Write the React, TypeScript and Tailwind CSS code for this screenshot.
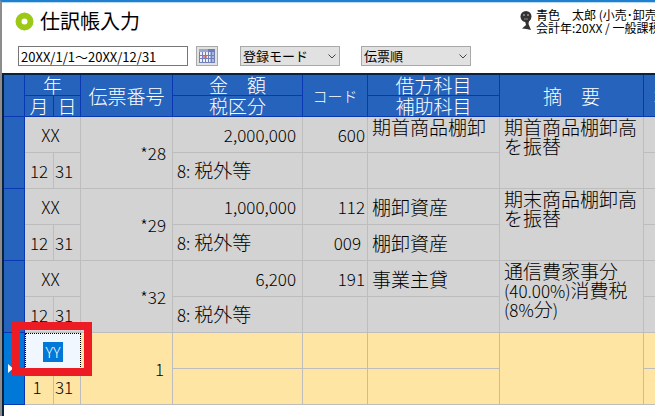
import { useState } from "react";

type Entry = {
  year: string;
  month: string;
  day: string;
  slip: string;
  amount: string;
  tax: string;
  code: string;
  subCode: string;
  account: string;
  accountTop?: boolean;
  subAccount: string;
  summary: string[];
};

const entries: Entry[] = [
  { year: "XX", month: "12", day: "31", slip: "*28", amount: "2,000,000", tax: "税外等", code: "600", subCode: "", account: "期首商品棚卸", accountTop: true, subAccount: "", summary: ["期首商品棚卸高", "を振替"] },
  { year: "XX", month: "12", day: "31", slip: "*29", amount: "1,000,000", tax: "税外等", code: "112", subCode: "009", account: "棚卸資産", subAccount: "棚卸資産", summary: ["期末商品棚卸高", "を振替"] },
  { year: "XX", month: "12", day: "31", slip: "*32", amount: "6,200", tax: "税外等", code: "191", subCode: "", account: "事業主貸", subAccount: "", summary: ["通信費家事分", "(40.00%)消費税", "(8%分)"] },
];

const head = "border-r border-b border-[#0a38b4] p-0 font-light";
const cell = "border-r border-b border-[#bdbdbd] p-0";

// Latin characters are set a little smaller than the kana and kanji
function Mixed({ text }: { text: string }) {
  return text.split(/([\x20-\x7e]+)/).map((part, i) =>
    /^[\x20-\x7e]+$/.test(part) ? (
      <span key={i} className="text-[17px]">
        {part}
      </span>
    ) : (
      part
    ),
  );
}

function CalendarIcon() {
  return (
    <svg width="16" height="14" viewBox="0 0 16 14" aria-hidden="true">
      <rect width="16" height="14" fill="#eef0f8" />
      <rect width="16" height="3" fill="#9aa6cc" />
      <rect x="9" width="7" height="3" fill="#6f7fb4" />
      <rect x="11" y="3" width="5" height="11" fill="#a9b4e0" />
      <rect x="4" y="6" width="4" height="4" fill="#f08a84" />
      <path d="M0.5 3V14M3.5 3V14M6.5 3V14M9.5 3V14M12.5 3V14M15.5 3V14M0 6.5H16M0 9.5H16M0 13.5H16" stroke="#7280b8" />
    </svg>
  );
}

function PersonIcon() {
  return (
    <svg className="mt-1 shrink-0" width="12" height="20" viewBox="0 0 12 20" aria-hidden="true">
      <ellipse cx="6" cy="5.5" rx="5.5" ry="5.5" fill="#333" />
      <path d="M5 10H9L8.500 13L11 19L6.500 18L2 17.500L6 14Z" fill="#333" />
      <circle cx="4" cy="4" r="1" fill="#999" />
      <circle cx="8" cy="4" r="1" fill="#999" />
      <path d="M4 8H8" stroke="#888" />
    </svg>
  );
}

function Dropdown({ label, options, className }: { label: string; options: string[]; className: string }) {
  return (
    <div className={`relative ${className}`}>
      <select
        aria-label={label}
        className="block h-5 w-full appearance-none border border-[#a9a9a9] bg-[#e1e1e1] pl-0.5 text-[13px] leading-4 text-black"
      >
        {options.map((o) => (
          <option key={o}>{o}</option>
        ))}
      </select>
      <svg className="pointer-events-none absolute top-2 right-1" width="8" height="5" viewBox="0 0 8 5" fill="none">
        <path d="M0.5 0.5L4 4L7.5 0.5" stroke="#444" />
      </svg>
    </div>
  );
}

function EntryRows({ entry }: { entry: Entry }) {
  return (
    <tbody className="bg-[#d3d3d3]">
      <tr className="h-9">
        <th rowSpan={2} scope="row" className={`${head} bg-[#2563bd]`} />
        <td colSpan={2} className={`${cell} pr-1 text-center`}>{entry.year}</td>
        <td rowSpan={2} className={`${cell} pr-1.5 text-right`}>{entry.slip}</td>
        <td className={`${cell} pr-1.5 text-right`}>{entry.amount}</td>
        <td className={`${cell} pr-0.5 text-right`}>{entry.code}</td>
        <td className={`${cell} pl-1 text-[19px] ${entry.accountTop ? "align-top" : ""}`}>{entry.account}</td>
        <td rowSpan={2} className={`${cell} pl-1 align-top text-[19px] leading-[19px]`}>
          {entry.summary.map((line) => (
            <p key={line} className="h-[19px]">
              <Mixed text={line} />
            </p>
          ))}
        </td>
        <td className={cell} />
      </tr>
      <tr className="h-9">
        <td className={`${cell} text-center`}>{entry.month}</td>
        <td className={`${cell} pl-px text-left`}>{entry.day}</td>
        <td className={`${cell} pl-1 text-[19px]`}>
          <Mixed text={`8: ${entry.tax}`} />
        </td>
        <td className={`${cell} pr-1.5 text-right`}>{entry.subCode}</td>
        <td className={`${cell} pl-1 text-[19px]`}>{entry.subAccount}</td>
        <td className={cell} />
      </tr>
    </tbody>
  );
}

export default function App() {
  const [period, setPeriod] = useState("20XX/1/1～20XX/12/31");
  const [year, setYear] = useState("YY");

  return (
    <main className="flex min-h-screen flex-col overflow-hidden border-t-2 border-l-2 border-t-[#2080cf] border-l-[#8c8c8c] bg-white font-['Noto_Sans_CJK_JP',sans-serif] text-black">
      <header className="flex h-11 justify-between overflow-hidden border-t border-[#b9dcf5] pl-[13px]">
        <div className="flex h-9 items-center gap-1.5">
          <svg width="19" height="19" viewBox="0 0 19 19" aria-hidden="true">
            <circle cx="9.5" cy="9.5" r="6" fill="none" stroke="#9bc916" strokeWidth="6" />
          </svg>
          <h1 className="text-[20px] leading-6 font-normal">仕訳帳入力</h1>
        </div>
        <div className="flex w-[135px] gap-1 pt-1 text-[12px] leading-[13px] whitespace-nowrap">
          <PersonIcon />
          <div className="pt-px">
            <p>青色　太郎 (小売･卸売業)</p>
            <p>会計年:20XX / 一般課税</p>
          </div>
        </div>
      </header>

      <div className="flex h-[27px] items-start pl-4">
        <input
          aria-label="期間"
          value={period}
          onChange={(e) => setPeriod(e.target.value)}
          className="h-5 w-[170px] border border-[#777] bg-white px-0.5 text-[13px] leading-4"
        />
        <button type="button" aria-label="カレンダー" className="ml-2 flex h-5 w-[22px] items-center justify-center border border-[#a9a9a9] bg-[#e1e1e1]">
          <CalendarIcon />
        </button>
        <Dropdown label="モード" options={["登録モード"]} className="ml-[22px] w-[100px]" />
        <Dropdown label="並び順" options={["伝票順", "日付順"]} className="ml-[21px] w-[110px]" />
      </div>

      <div className="grow overflow-hidden border-t-2 border-l-2 border-[#0b2140]">
        <table className="w-[740px] table-fixed border-separate border-spacing-0 text-[17px] leading-5 font-light">
          <colgroup>
            <col className="w-[21px]" />
            <col className="w-[29px]" />
            <col className="w-[27px]" />
            <col className="w-[92px]" />
            <col className="w-[130px]" />
            <col className="w-[65px]" />
            <col className="w-[132px]" />
            <col className="w-[144px]" />
            <col className="w-[100px]" />
          </colgroup>
          <thead className="bg-[#2563bd] text-[19px] text-white">
            <tr className="h-[21px]">
              <th rowSpan={2} className={head} />
              <th colSpan={2} className={head}>年</th>
              <th rowSpan={2} className={head}>伝票番号</th>
              <th className={head}>金　額</th>
              <th rowSpan={2} className={`${head} text-[15px]`}>コード</th>
              <th className={head}>借方科目</th>
              <th rowSpan={2} className={head}>摘　要</th>
              <th rowSpan={2} className={`${head} pl-2 text-left text-[15px]`}>コード</th>
            </tr>
            <tr className="h-[21px]">
              <th className={head}>月</th>
              <th className={head}>日</th>
              <th className={head}>税区分</th>
              <th className={head}>補助科目</th>
            </tr>
          </thead>
          {entries.map((entry) => (
            <EntryRows key={entry.slip} entry={entry} />
          ))}
          <tbody className="bg-[#ffe5a3]">
            <tr className="h-9">
              <th rowSpan={2} scope="row" className={`${head} bg-[#0078d7]`}>
                <svg width="5" height="9" viewBox="0 0 5 9" className="ml-1">
                  <path d="M0 0L5 4.5L0 9Z" fill="#fff" />
                </svg>
              </th>
              <td colSpan={2} className="relative border border-dotted border-black bg-[#f1f7ff] p-0 text-center">
                <input
                  aria-label="年"
                  value={year}
                  onChange={(e) => setYear(e.target.value)}
                  className="h-5 w-5 bg-[#0078d7] text-center text-[15px] text-white"
                />
                <span className="pointer-events-none absolute -top-3 -right-3 -bottom-2 -left-3.5 border-8 border-[#ed1c24]" />
              </td>
              <td rowSpan={2} className={`${cell} pr-2 text-right`}>1</td>
              <td className={cell} />
              <td className={cell} />
              <td className={cell} />
              <td rowSpan={2} className={cell} />
              <td className={cell} />
            </tr>
            <tr className="h-9">
              <td className={`${cell} pr-1 text-center`}>1</td>
              <td className={`${cell} pl-px text-left`}>31</td>
              <td className={cell} />
              <td className={cell} />
              <td className={cell} />
              <td className={cell} />
            </tr>
          </tbody>
        </table>
      </div>
    </main>
  );
}
